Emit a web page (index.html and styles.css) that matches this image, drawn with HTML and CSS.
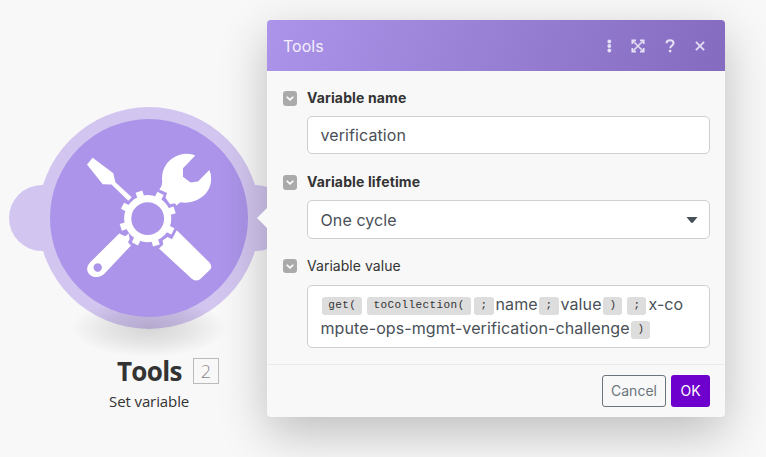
FILE: index.html
```html
<!DOCTYPE html>
<html lang="en">
<head>
<meta charset="utf-8">
<title>Tools</title>
<link rel="stylesheet" href="styles.css">
</head>
<body>
<main class="canvas">
  <section class="module">
    <svg class="module-art" viewBox="0 95 298 275" width="298" height="275" aria-hidden="true">
      <defs>
        <radialGradient id="ground"><stop offset="0" stop-color="#000" stop-opacity=".14"/><stop offset=".5" stop-color="#000" stop-opacity=".08"/><stop offset="1" stop-color="#000" stop-opacity="0"/></radialGradient>
        <g id="tooth"><rect x="23" y="-3.5" width="5.3" height="7"/></g>
      </defs>
      <g fill="#d2c5ef"><circle cx="42" cy="218" r="33"/><circle cx="256" cy="218" r="33"/><circle cx="149" cy="218" r="111"/></g>
      <ellipse cx="149" cy="328" rx="78" ry="29" fill="url(#ground)"/>
      <circle cx="149" cy="218" r="99" fill="#ab94e9"/>
      <g fill="#fff">
        <path d="M92.7 157.7 113.3 173.3 115.4 182.3 131.700 197.2 128.3 200.8 111.5 184.6 102.7 184.3 87 164.5Z"/>
        <path d="M195.3 155.5A24.4 24.4 0 0 0 162 178.5Q163 185.5 159.3 189.5L167 193 165.5 197.8 170 204.3 175 203.2 176.3 205.5 180.5 202.2C193 204.8 212 196 211 178Q211 173 209.3 170L198 181.5 190.5 182.5 183 176.8V168.3Z"/>
        <path fill-rule="evenodd" d="M119.2 233.5 125 236.2 128.8 233.6 129.7 239 128 242.2 131 245.5 106.5 271.5C97 284 80.500 273 90 262.500ZM97.700 263.300a4.200 4.200 0 1 0 .01 0Z"/>
        <path d="M176.800 230.300 209 262Q213 266 210 269.800L200 279.300Q195.500 282.300 191.500 278.500L159 248.500 163.300 244.500 162.600 240.500 167.500 237 172 239.200Z"/>
        <g transform="translate(147.700 218.600)">
          <use href="#tooth" transform="rotate(-18)"/><use href="#tooth" transform="rotate(27)"/><use href="#tooth" transform="rotate(72)"/><use href="#tooth" transform="rotate(117)"/><use href="#tooth" transform="rotate(162)"/><use href="#tooth" transform="rotate(207)"/><use href="#tooth" transform="rotate(252)"/><use href="#tooth" transform="rotate(297)"/>
        </g>
      </g>
      <circle cx="147.700" cy="218.600" r="20" fill="none" stroke="#fff" stroke-width="7.200"/>
    </svg>
    <div class="module-caption">
      <div class="module-title"><h1>Tools</h1><span class="module-id">2</span></div>
      <p>Set variable</p>
    </div>
  </section>

  <section class="panel">
    <header class="panel-header">
      <h2>Tools</h2>
      <div class="actions">
        <svg width="12" height="14" viewBox="0 0 12 14"><g fill="currentColor"><circle cx="6.300" cy="2.500" r="1.900"/><circle cx="6.300" cy="7" r="1.900"/><circle cx="6.300" cy="11.500" r="1.900"/></g></svg>
        <svg class="expand" width="14" height="14" viewBox="0 0 14 14"><path d="M2 2 12 12M12 2 2 12" stroke="currentColor" stroke-width="1.500"/><path d="M1.300 5V1.300H5M9 1.300H12.700V5M1.300 9V12.700H5M9 12.700H12.700V9" fill="none" stroke="currentColor" stroke-width="1.700"/></svg>
        <svg class="help" width="10" height="14" viewBox="0 0 10 14" fill="none"><path d="M1.500 4.300C1.500 .200 8.500 .200 8.500 4.300 8.500 6.700 5.200 6.500 5.200 9.300" stroke="currentColor" stroke-width="2"/><circle cx="5.100" cy="12.100" r="1.400" fill="currentColor"/></svg>
        <svg class="close" width="10" height="10" viewBox="0 0 10 10"><path d="M.900.900 9.100 9.100M9.100.900.900 9.100" stroke="currentColor" stroke-width="1.700"/></svg>
      </div>
    </header>
    <div class="fields">
      <div class="field">
        <span class="toggle"><svg width="8" height="5" viewBox="0 0 8 5"><path d="M.700.700 4 3.900 7.300.700"/></svg></span>
        <label class="strong">Variable name</label>
        <div class="control">verification</div>
      </div>
      <div class="field">
        <span class="toggle"><svg width="8" height="5" viewBox="0 0 8 5"><path d="M.700.700 4 3.900 7.300.700"/></svg></span>
        <label class="strong">Variable lifetime</label>
        <div class="control select">One cycle<svg width="12" height="6" viewBox="0 0 12 6"><path d="M.500 0H11.500L7 5.500Q6 6.300 5 5.500Z" fill="#455058"/></svg></div>
      </div>
      <div class="field value">
        <span class="toggle"><svg width="8" height="5" viewBox="0 0 8 5"><path d="M.700.700 4 3.900 7.300.700"/></svg></span>
        <label>Variable value</label>
        <div class="control formula">
          <div class="line"><code>get(</code><code class="after">toCollection(</code><code class="next">;</code><span>name</span><code>;</code><span>value</span><code>)</code><code class="after">;</code><span>x-co</span></div>
          <div class="line"><span>mpute-ops-mgmt-verification-challenge</span><code>)</code></div>
        </div>
      </div>
    </div>
    <footer class="panel-footer"><button class="cancel">Cancel</button><button class="ok">OK</button></footer>
    <span class="pointer"></span>
  </section>
</main>
</body>
</html>
```
FILE: styles.css
```css
* { box-sizing: border-box; }
body { margin: 0; background: #f8f8f8; font-family: Inter, "Liberation Sans", sans-serif; }
h1, h2, p { margin: 0; }
svg { display: block; flex: none; }
.canvas { position: relative; width: 766px; height: 457px; overflow: hidden; }

.module { position: absolute; left: 0; top: 95px; width: 298px; }
.module-caption { position: absolute; left: 0; top: 257px; width: 298px; color: #333; font-family: "Open Sans", "Noto Sans", sans-serif; }
.module-title { display: flex; align-items: center; padding-left: 117px; height: 38px; }
.module-title h1 { width: 76px; font-size: 26px; line-height: 38px; font-weight: 700; letter-spacing: -.7px; }
.module-id { width: 26px; height: 26px; border: 1px solid #bbb; color: #888; font-size: 18px; line-height: 24px; font-weight: 300; text-align: center; }
.module-caption p { padding-left: 109px; font-size: 15px; line-height: 22px; letter-spacing: -.1px; }

.panel { position: absolute; left: 267px; top: 20px; width: 458px; height: 397px; display: flex; flex-direction: column; border-radius: 4px; background: #f8f8f8; box-shadow: 0 16px 48px rgba(0, 0, 0, .24); }
.pointer { position: absolute; left: -10px; top: 188px; border: solid transparent; border-width: 10px 10px 10px 0; border-right-color: #f8f8f8; }
.panel-header { height: 51px; display: flex; align-items: center; justify-content: space-between; padding: 0 20.5px 0 16px; border-radius: 4px 4px 0 0; background: linear-gradient(110deg, #ab94e9, #846bc0); color: #f3effc; }
.panel-header h2 { font-size: 16px; font-weight: 400; line-height: 24px; padding-top: 1px; }
.actions { display: flex; align-items: center; color: #e6e0f5; }
.expand { margin-left: 16px; }
.help { margin-left: 20px; }
.close { margin-left: 20px; }

.fields { padding: 15px 15px 0 16px; height: 293px; display: flex; flex-direction: column; gap: 16px; }
.field { display: grid; grid-template-columns: 24px 1fr; grid-template-rows: 24px auto; row-gap: 6px; align-items: center; }
.value { grid-template-rows: 22px auto; row-gap: 8px; }
.toggle { width: 14px; height: 15px; display: grid; place-items: center; border-radius: 3px; background: #aaa; }
.value .toggle { height: 14px; }
.toggle path { fill: none; stroke: #fff; stroke-width: 1.6; }
label { font-size: 14px; line-height: 22px; color: #333; letter-spacing: .04px; }
.strong { font-weight: 700; letter-spacing: .13px; }
.control { grid-column: 2; width: 403px; height: 38px; padding: 0 13px 0 12.5px; border: 1px solid #cfcfcf; border-radius: 5px; background: #fff; color: #495057; font-size: 16px; line-height: 36px; letter-spacing: .1px; }
.select { display: flex; align-items: center; justify-content: space-between; height: 39px; }
.select svg { margin-right: -1.5px; }
.formula { height: 63px; padding: 6px 13px 0 12.5px; }
.line { display: flex; align-items: center; height: 24px; white-space: nowrap; }
.line code { margin: 4px 2px 0 1.8px; height: 18px; padding: 0 6px; border-radius: 3px; background: #ddd; color: #333; font: 11px/17px "Liberation Mono", monospace; letter-spacing: .42px; }
.line .after { margin-left: 3px; }
.panel-footer { flex: 1; display: flex; justify-content: flex-end; align-items: flex-start; gap: 5px; padding: 10px 15px; border-top: 1px solid #ebebeb; }
button { height: 32px; padding: 0; border-radius: 3px; font: 14px/20px Inter, sans-serif; }
.cancel { width: 64px; border: 1px solid #6c757d; background: transparent; color: #6c757d; }
.ok { width: 39px; border: 0; background: #6d00cc; color: #fff; }
```
